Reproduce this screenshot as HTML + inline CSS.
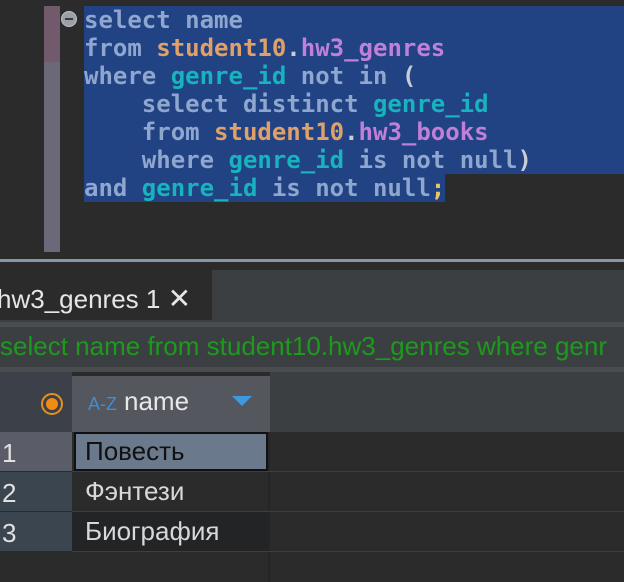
<!DOCTYPE html>
<html><head><meta charset="utf-8"><style>
*{margin:0;padding:0;box-sizing:border-box}
body{width:624px;height:582px;overflow:hidden;background:#2b2b2b;position:relative;font-family:"Liberation Sans",sans-serif}
.a{position:absolute}
.code{font-family:"DejaVu Sans Mono",monospace;font-weight:bold;font-size:24px;line-height:28px;color:#8fa6cf;white-space:pre}
.c{color:#17b3be}.o{color:#e0a06a}.p{color:#c07fd8}.y{color:#e8c46a}.w{color:#c8ced8}
</style></head><body>
<div class="a" style="left:44px;top:6px;width:16px;height:56px;background:#705a6b"></div>
<div class="a" style="left:44px;top:62px;width:16px;height:190px;background:#6b6878"></div>
<div class="a" style="left:61px;top:11px;width:16px;height:16px;border-radius:50%;background:#9aa0a6;border:1px solid #c0c4c8"></div>
<div class="a" style="left:65px;top:18px;width:8px;height:2px;background:#3a3a3a"></div>
<div class="a" style="left:84px;top:6px;width:540px;height:168px;background:#214283"></div>
<div class="a" style="left:84px;top:174px;width:361px;height:28px;background:#214283"></div>
<div class="a code" style="left:84px;top:6px">select name
from <span class="o">student10</span><span class="w">.</span><span class="p">hw3_genres</span>
where <span class="c">genre_id</span> not in <span class="w">(</span>
    select distinct <span class="c">genre_id</span>
    from <span class="o">student10</span><span class="w">.</span><span class="p">hw3_books</span>
    where <span class="c">genre_id</span> is not null<span class="w">)</span>
and <span class="c">genre_id</span> is not null<span class="y">;</span></div>
<div class="a" style="left:0;top:259px;width:624px;height:3px;background:#8797a8"></div>
<div class="a" style="left:0;top:270px;width:624px;height:52px;background:#3c3f41"></div>
<div class="a" style="left:0;top:270px;width:212px;height:50px;background:#2b2b2b;overflow:hidden">
<div class="a" style="left:-3px;top:12px;font-size:26px;color:#e6e6e6;white-space:nowrap">hw3_genres 1 <span style="font-size:28px">✕</span></div></div>
<div class="a" style="left:0;top:322px;width:624px;height:5px;background:#4a4d50"></div>
<div class="a" style="left:0;top:327px;width:624px;height:40px;background:#3c3f41;overflow:hidden">
<div class="a" style="left:0;top:4px;font-size:26px;color:#1d9a1d;white-space:nowrap">select name from student10.hw3_genres where genr</div></div>
<div class="a" style="left:0;top:367px;width:624px;height:5px;background:#4a4d50"></div>
<div class="a" style="left:0;top:372px;width:624px;height:210px;background:#2b2b2b"></div>
<div class="a" style="left:0;top:372px;width:72px;height:60px;background:#3c4048"></div>
<div class="a" style="left:270px;top:372px;width:354px;height:60px;background:#3c3f41"></div>
<div class="a" style="left:72px;top:376px;width:198px;height:56px;background:#55575f"></div>
<div class="a" style="left:41px;top:393px;width:22px;height:22px;border-radius:50%;border:2px solid #e6901f"></div>
<div class="a" style="left:46px;top:398px;width:12px;height:12px;border-radius:50%;background:#f08c12"></div>
<div class="a" style="left:88px;top:394px;font-size:18px;color:#3d8fd8">A-Z</div>
<div class="a" style="left:124px;top:386px;font-size:26px;color:#e8e8e8">name</div>
<div class="a" style="left:232px;top:396px;width:0;height:0;border-left:10px solid transparent;border-right:10px solid transparent;border-top:10px solid #3d9ae0"></div>
<div class="a" style="left:0;top:432px;width:72px;height:39px;background:#5a5c68"></div>
<div class="a" style="left:0;top:472px;width:72px;height:39px;background:#3a4550"></div>
<div class="a" style="left:0;top:512px;width:72px;height:39px;background:#3a4550"></div>
<div class="a" style="left:72px;top:432px;width:198px;height:150px;border-right:2px solid #252525"></div>
<div class="a" style="left:74px;top:432px;width:194px;height:39px;background:#6a7a8c;border:2px solid #111"></div>
<div class="a" style="left:72px;top:511px;width:196px;height:40px;background:#232425"></div>
<div class="a" style="left:72px;top:471px;width:552px;height:1px;background:#3c3f41"></div>
<div class="a" style="left:72px;top:511px;width:552px;height:1px;background:#3c3f41"></div>
<div class="a" style="left:72px;top:551px;width:552px;height:1px;background:#3c3f41"></div>
<div class="a" style="left:2px;top:438px;font-size:26px;color:#e0e0e0">1</div>
<div class="a" style="left:2px;top:478px;font-size:26px;color:#e0e0e0">2</div>
<div class="a" style="left:2px;top:518px;font-size:26px;color:#e0e0e0">3</div>
<div class="a" style="left:85px;top:436px;font-size:26px;color:#111">Повесть</div>
<div class="a" style="left:85px;top:476px;font-size:26px;color:#d8d8d8">Фэнтези</div>
<div class="a" style="left:85px;top:516px;font-size:26px;color:#d8d8d8">Биография</div>
</body></html>
